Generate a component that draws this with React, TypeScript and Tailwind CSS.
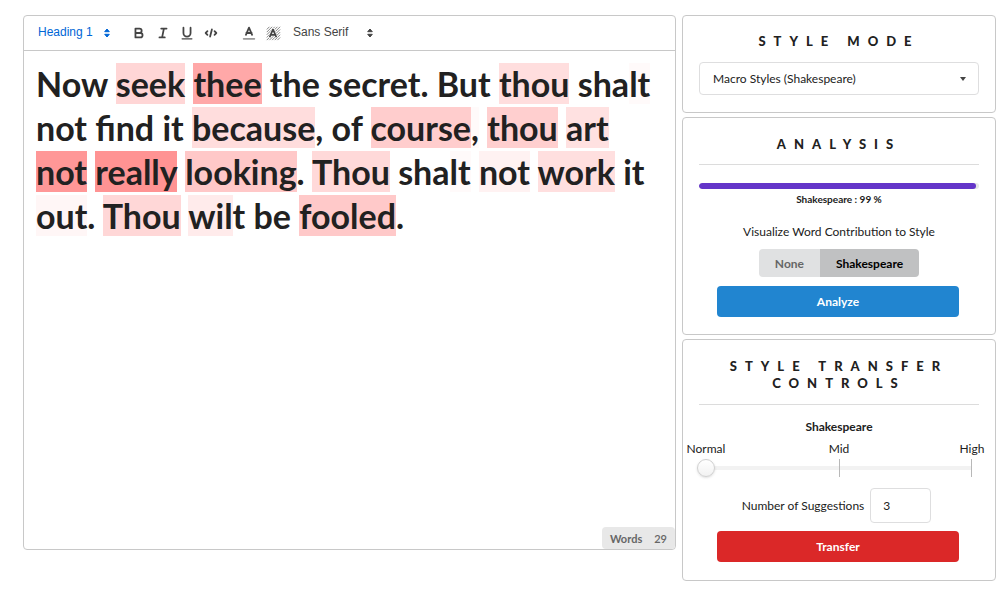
import { ReactNode, useState } from "react";

type Run = { text: string; tone?: string };

const RUNS: Run[] = [
  { text: "Now " },
  { text: "seek", tone: "bg-[#ffd6d6]" },
  { text: " " },
  { text: "thee", tone: "bg-[#ffa8a8]" },
  { text: " the secret. But " },
  { text: "thou", tone: "bg-[#ffdede]" },
  { text: " sha" },
  { text: "lt", tone: "bg-[#fffafa]" },
  { text: " not find it " },
  { text: "because", tone: "bg-[#ffdddd]" },
  { text: ", of " },
  { text: "course", tone: "bg-[#ffcdcd]" },
  { text: ",", tone: "bg-[#fffafa]" },
  { text: " " },
  { text: "thou", tone: "bg-[#ffcfcf]" },
  { text: " " },
  { text: "art", tone: "bg-[#ffe1e1]" },
  { text: " " },
  { text: "not", tone: "bg-[#ff9797]" },
  { text: " " },
  { text: "really", tone: "bg-[#ff9393]" },
  { text: " " },
  { text: "looking", tone: "bg-[#ffc8c8]" },
  { text: ". " },
  { text: "Thou", tone: "bg-[#ffd9d9]" },
  { text: " sha" },
  { text: "lt", tone: "bg-[#fffafa]" },
  { text: " " },
  { text: "not", tone: "bg-[#fff2f2]" },
  { text: " " },
  { text: "work", tone: "bg-[#ffdfdf]" },
  { text: " it " },
  { text: "out", tone: "bg-[#fff6f6]" },
  { text: ". " },
  { text: "Thou", tone: "bg-[#ffd7d7]" },
  { text: " " },
  { text: "wil", tone: "bg-[#ffebeb]" },
  { text: "t be " },
  { text: "fooled", tone: "bg-[#ffc9c9]" },
  { text: "." },
];

function Panel({ children, className }: { children: ReactNode; className: string }) {
  return <section className={`rounded-[4px] border border-[#c8c8c8] bg-white ${className}`}>{children}</section>;
}

function Title({ children }: { children: ReactNode }) {
  return <h2 className="text-center text-[13px] leading-[17px] font-black tracking-[8px] uppercase">{children}</h2>;
}

function Picker({ label, options, className }: { label: string; options: string[]; className: string }) {
  return (
    <div className={`relative flex items-center ${className}`}>
      <select aria-label={label} className="w-full appearance-none bg-transparent pb-[2px] font-['Liberation_Sans',sans-serif] text-[12px] leading-4 outline-none">
        {options.map((o) => (
          <option key={o}>{o}</option>
        ))}
      </select>
      <svg viewBox="0 0 6 10" className="pointer-events-none absolute right-0 h-[10px] w-[6px]" fill="currentColor" stroke="currentColor" strokeLinejoin="round">
        <path d="M3 1L5.3 3.7H.7zM3 9L.7 6.3h4.6z" />
      </svg>
    </div>
  );
}

function Tool({ label, children }: { label: string; children: ReactNode }) {
  return (
    <button type="button" aria-label={label} className="flex h-5 w-6 items-center justify-center">
      <svg viewBox="0 0 18 18" className="h-4 w-4" fill="none" stroke="#444" strokeWidth="2" strokeLinecap="round" strokeLinejoin="round">
        {children}
      </svg>
    </button>
  );
}

function Toolbar() {
  return (
    <div className="flex h-[35px] items-center border-b border-[#c8c8c8] pl-[14px] text-[#444]">
      <Picker label="Text style" options={["Heading 1", "Heading 2", "Normal"]} className="w-[72px] text-[#0066d6]" />
      <div className="ml-[17px] flex">
        <Tool label="Bold">
          <path d="M5 4h4.5a2.5 2.5 0 0 1 0 5H5zM5 9h5.5a2.5 2.5 0 0 1 0 5H5z" />
        </Tool>
        <Tool label="Italic">
          <path d="M7 4h6M5 14h6M8 14l2-10" />
        </Tool>
        <Tool label="Underline">
          <path d="M5 3v6a4 4 0 0 0 8 0V3" />
          <path d="M3.5 15.5h11" strokeWidth="1.4" />
        </Tool>
        <Tool label="Code">
          <path d="M5 7L3 9l2 2M13 7l2 2-2 2M10 5L8 13" />
        </Tool>
      </div>
      <div className="ml-[14px] flex">
        <Tool label="Text color">
          <path d="M3 15.5h12" stroke="#999" />
          <path d="M5.5 11L9 3l3.5 8M12 9H6" />
        </Tool>
        <Tool label="Background color">
          <path d="M2 5l3-3M2 8l6-6M2 11l9-9M2 14L14 2M2 17L17 2M5 17L17 5M8 17l9-9M11 17l6-6M14 17l3-3" strokeWidth="1" stroke="#777" strokeLinecap="butt" />
          <path d="M5.5 13L9 5l3.5 8M12 11H6" stroke="#fff" strokeWidth="3.4" />
          <path d="M5.5 13L9 5l3.5 8M12 11H6" />
        </Tool>
      </div>
      <Picker label="Font" options={["Sans Serif", "Serif", "Monospace"]} className="ml-[8px] w-[80px]" />
    </div>
  );
}

export default function App() {
  const [view, setView] = useState("Shakespeare");
  const [strength, setStrength] = useState(0);
  return (
    <main className="flex items-start gap-[6px] bg-white pt-[15px] pr-1 pb-5 pl-[23px] font-[Lato,sans-serif] text-[12px] leading-[17px] text-[#212121]">
      <section className="flex min-h-[535px] min-w-0 flex-1 flex-col rounded-[4px] border border-[#c8c8c8]">
        <Toolbar />
        <h1 className="flex-1 px-3 pt-[11px] text-[34px] leading-[44px] font-bold">
          {RUNS.map((r, i) => (r.tone ? <span key={i} className={r.tone}>{r.text}</span> : r.text))}
        </h1>
        <div className="flex h-[22px] items-center gap-3 self-end rounded-[4px] bg-[#e8e8e8] px-2 text-[11px] text-[#666]">
          <span className="font-bold">Words</span>
          <span className="font-semibold">29</span>
        </div>
      </section>

      <aside className="flex w-[314px] shrink-0 flex-col gap-1">
        <Panel className="px-4 py-[17px]">
          <Title>Style Mode</Title>
          <div className="relative mt-3 flex items-center">
            <select aria-label="Style mode" className="h-[33px] w-full appearance-none rounded-[4px] border border-[#dededf] bg-white px-[13px] outline-none">
              <option>Macro Styles (Shakespeare)</option>
            </select>
            <svg viewBox="0 0 6 4" className="pointer-events-none absolute right-[13px] h-1 w-[6px]" fill="#444">
              <path d="M0 0h6L3 4z" />
            </svg>
          </div>
        </Panel>

        <Panel className="px-4 pt-[18px] pb-[17px] text-center">
          <Title>Analysis</Title>
          <hr className="mt-[11px] border-[#dcdcdc]" />
          <div className="mt-[18px] h-[6px] overflow-hidden rounded-full bg-[#e6e6e6]">
            <div className="h-full rounded-full bg-[#6435c9]" style={{ width: "99%" }} />
          </div>
          <p className="mt-[2px] text-[10px] font-bold">Shakespeare : 99 %</p>
          <p className="mt-[15px]">Visualize Word Contribution to Style</p>
          <div className="mt-[9px] flex justify-center">
            <button type="button" onClick={() => setView("None")} className={`h-7 rounded-l-[4px] px-4 font-bold ${view === "None" ? "bg-[#c0c1c2] text-black" : "bg-[#e0e1e2] text-[#666]"}`}>
              None
            </button>
            <button type="button" onClick={() => setView("Shakespeare")} className={`h-7 rounded-r-[4px] px-4 font-bold ${view === "Shakespeare" ? "bg-[#c0c1c2] text-black" : "bg-[#e0e1e2] text-[#666]"}`}>
              Shakespeare
            </button>
          </div>
          <div className="mt-[9px] pr-5 pl-[18px]">
            <button type="button" className="h-[31px] w-full rounded-[4px] bg-[#2185d0] font-bold text-white">Analyze</button>
          </div>
        </Panel>

        <Panel className="py-[18px] text-center">
          <div className="px-4">
            <Title>Style Transfer Controls</Title>
            <hr className="mt-3 border-[#dcdcdc]" />
          </div>
          <label htmlFor="strength" className="mt-[13px] block font-bold">Shakespeare</label>
          <div className="mt-[5px] flex justify-between px-[3px]">
            <span className="w-10">Normal</span>
            <span className="w-10">Mid</span>
            <span className="w-10">High</span>
          </div>
          <div className="relative mx-[14px] mt-[2px] h-[18px]">
            <div className="absolute inset-x-[9px] top-[7px] h-1 bg-[#f2f2f2]" />
            <div className="absolute inset-x-[9px] inset-y-0 flex justify-between">
              <i className="w-px" />
              <i className="w-px bg-[#b8b8b8]" />
              <i className="w-px bg-[#b8b8b8]" />
            </div>
            <input
              id="strength"
              type="range"
              min={0}
              max={2}
              value={strength}
              onChange={(e) => setStrength(Number(e.target.value))}
              className="absolute inset-0 h-[18px] w-full appearance-none bg-transparent [&::-webkit-slider-thumb]:h-[18px] [&::-webkit-slider-thumb]:w-[18px] [&::-webkit-slider-thumb]:appearance-none [&::-webkit-slider-thumb]:rounded-full [&::-webkit-slider-thumb]:border [&::-webkit-slider-thumb]:border-[#d0d0d0] [&::-webkit-slider-thumb]:bg-linear-to-b [&::-webkit-slider-thumb]:from-white [&::-webkit-slider-thumb]:to-[#f2f2f2] [&::-webkit-slider-thumb]:shadow-sm"
            />
          </div>
          <div className="mt-[11px] flex items-center justify-center gap-[6px] pr-[5px]">
            <label htmlFor="count">Number of Suggestions</label>
            <input
              id="count"
              type="number"
              defaultValue={3}
              className="h-[35px] w-[61px] appearance-none rounded-[4px] border border-[#dededf] px-3 outline-none [&::-webkit-inner-spin-button]:appearance-none"
            />
          </div>
          <div className="mt-2 pr-9 pl-[34px]">
            <button type="button" className="h-[31px] w-full rounded-[4px] bg-[#db2828] font-bold text-white">Transfer</button>
          </div>
        </Panel>
      </aside>
    </main>
  );
}
